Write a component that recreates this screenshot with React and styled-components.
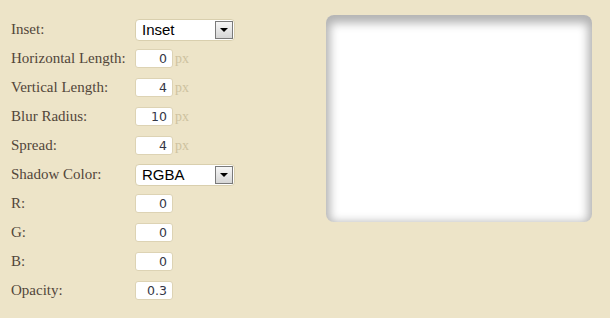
import React from 'react';
import styled, { createGlobalStyle } from 'styled-components';

const GlobalStyle = createGlobalStyle`
  html, body {
    margin: 0;
    padding: 0;
    background: #ede4c8;
  }
`;

const Page = styled.div`
  display: flex;
  align-items: flex-start;
  padding: 15px 18px 0 11px;
  height: 318px;
  box-sizing: border-box;
`;

const Form = styled.div`
  display: flex;
  flex-direction: column;
`;

const Row = styled.div`
  display: grid;
  grid-template-columns: 124px auto;
  align-items: center;
  height: 29px;
`;

const Label = styled.label`
  font-family: 'Liberation Serif', serif;
  font-size: 15px;
  color: #52463a;
`;

const Field = styled.div`
  display: flex;
  align-items: center;
`;

const SelectWrap = styled.div`
  position: relative;
  width: 100px;
  height: 22px;
`;

const Select = styled.select`
  appearance: none;
  width: 100%;
  height: 100%;
  box-sizing: border-box;
  margin: 0;
  padding: 0 0 0 6px;
  border: 1px solid #d9cfae;
  border-radius: 4px;
  background: #fff;
  font-family: 'Liberation Sans', Arial, sans-serif;
  font-size: 15px;
  color: #000;
  outline: none;
`;

const DropButton = styled.span`
  position: absolute;
  top: 2px;
  right: 2px;
  width: 16px;
  height: 16px;
  border: 1px solid #7a7a7a;
  background: linear-gradient(#f6f6f6, #d6d6d6);
  display: flex;
  align-items: center;
  justify-content: center;
  pointer-events: none;

  &::after {
    content: '';
    border-left: 4px solid transparent;
    border-right: 4px solid transparent;
    border-top: 4px solid #000;
  }
`;

const NumberInput = styled.input`
  width: 38px;
  height: 19px;
  box-sizing: border-box;
  margin: 0;
  padding: 0 5px 0 2px;
  border: 1px solid #ddd3b4;
  border-radius: 3px;
  background: #fff;
  text-align: right;
  font-family: 'DejaVu Sans', Tahoma, sans-serif;
  font-size: 12.5px;
  color: #343646;
  outline: none;
`;

const Unit = styled.span`
  margin-left: 2px;
  font-family: 'Liberation Serif', serif;
  font-size: 14px;
  color: #cdc2a0;
`;

const Preview = styled.div`
  flex: none;
  margin-left: auto;
  width: 266px;
  height: 207px;
  background: #fff;
  border-radius: 8px;
  box-shadow: inset 0 4px 10px 4px rgba(0, 0, 0, 0.3);
`;

const fields = [
  { label: 'Inset:', type: 'select', options: ['Inset', 'Outset'] },
  { label: 'Horizontal Length:', value: '0', unit: true },
  { label: 'Vertical Length:', value: '4', unit: true },
  { label: 'Blur Radius:', value: '10', unit: true },
  { label: 'Spread:', value: '4', unit: true },
  { label: 'Shadow Color:', type: 'select', options: ['RGBA', 'HEX'] },
  { label: 'R:', value: '0' },
  { label: 'G:', value: '0' },
  { label: 'B:', value: '0' },
  { label: 'Opacity:', value: '0.3' },
];

export default function App() {
  return (
    <>
      <GlobalStyle />
      <Page>
        <Form>
          {fields.map((f) => (
            <Row key={f.label}>
              <Label>{f.label}</Label>
              <Field>
                {f.type === 'select' ? (
                  <SelectWrap>
                    <Select defaultValue={f.options[0]}>
                      {f.options.map((o) => (
                        <option key={o}>{o}</option>
                      ))}
                    </Select>
                    <DropButton />
                  </SelectWrap>
                ) : (
                  <>
                    <NumberInput type="text" defaultValue={f.value} />
                    {f.unit && <Unit>px</Unit>}
                  </>
                )}
              </Field>
            </Row>
          ))}
        </Form>
        <Preview />
      </Page>
    </>
  );
}
